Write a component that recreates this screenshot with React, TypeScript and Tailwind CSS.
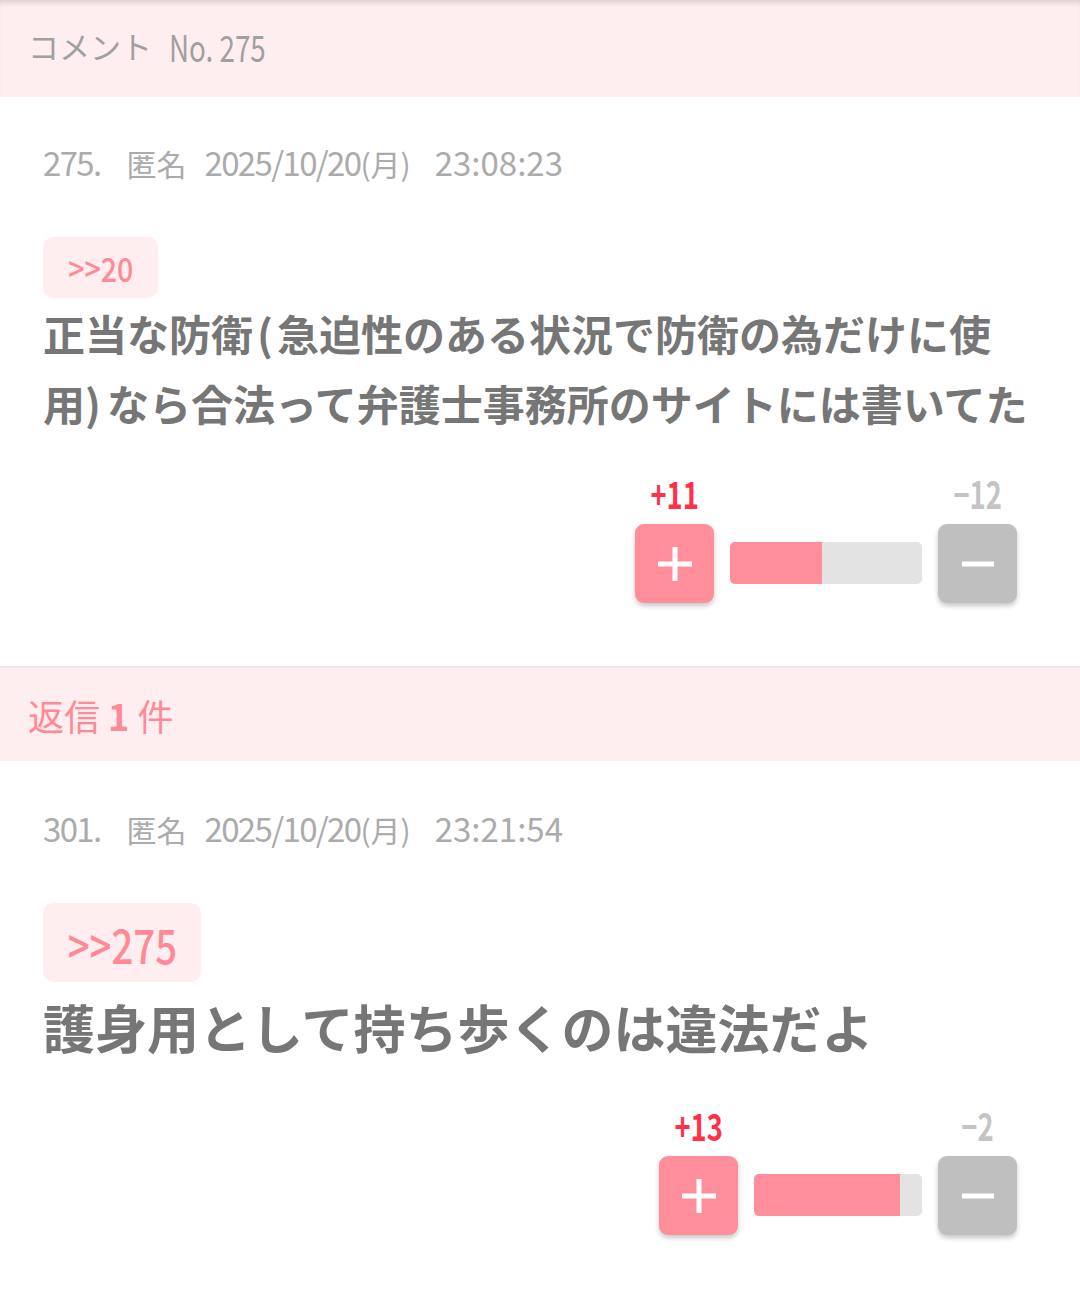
import React from 'react';

const font = { fontFamily: '"Noto Sans CJK JP", "Noto Sans", sans-serif' };

type CommentProps = {
  no: string;
  date: string;
  time: string;
  anchor: string;
  anchorClass: string;
  anchorText: string;
  body: React.ReactNode;
  bodyClass: string;
  plus: number;
  minus: number;
  barWidth: number;
  padClass: string;
  gapClass: string;
};

const PlusIcon = () => (
  <svg width="34" height="34" viewBox="0 0 34 34">
    <rect x="14.5" y="0" width="5" height="34" fill="#fff" />
    <rect x="0" y="14.5" width="34" height="5" fill="#fff" />
  </svg>
);

const MinusIcon = () => (
  <svg width="32" height="6" viewBox="0 0 32 6">
    <rect x="0" y="0.5" width="32" height="5" fill="#fff" />
  </svg>
);

const Votes = ({ plus, minus, barWidth }: { plus: number; minus: number; barWidth: number }) => {
  const ratio = plus / (plus + minus);
  return (
    <div className="flex justify-end items-end pr-[20px]">
      <div className="flex flex-col items-center">
        <span className="inline-block scale-x-[0.72] text-[38px] leading-[40px] font-bold text-[#ff3149]">+{plus}</span>
        <button className="mt-[11px] w-[79px] h-[79px] rounded-[9px] bg-[#ff8e9a] flex items-center justify-center shadow-[0_3px_5px_rgba(0,0,0,0.22)]">
          <PlusIcon />
        </button>
      </div>
      <div
        className="mx-[16px] mb-[19px] h-[42px] rounded-[5px] bg-[#e3e3e3] overflow-hidden"
        style={{ width: barWidth }}
      >
        <div className="h-full bg-[#ff8e9a]" style={{ width: `${ratio * 100}%` }} />
      </div>
      <div className="flex flex-col items-center">
        <span className="inline-block scale-x-[0.72] text-[38px] leading-[40px] font-bold text-[#c4c4c4]">−{minus}</span>
        <button className="mt-[11px] w-[79px] h-[79px] rounded-[9px] bg-[#bfbfbf] flex items-center justify-center shadow-[0_3px_5px_rgba(0,0,0,0.22)]">
          <MinusIcon />
        </button>
      </div>
    </div>
  );
};

const Comment = ({ no, date, time, anchor, anchorClass, anchorText, body, bodyClass, plus, minus, barWidth, padClass, gapClass }: CommentProps) => (
  <div className={`bg-white px-[43px] ${padClass}`}>
    <div className="flex items-baseline text-[30px] leading-[45px] text-[#ababab]">
      <span className="text-[33px] tracking-[-0.05em]">{no}.</span>
      <span className="ml-[26px]">匿名</span>
      <span className="ml-[18px] text-[33px] tracking-[-0.05em]">{date}</span>
      <span>(月)</span>
      <span className="ml-[24px] text-[33px]">{time}</span>
    </div>
    <div className="mt-[51px] flex">
      <span className={`flex items-center justify-center rounded-[10px] bg-[#ffeef0] text-[#ff8a96] font-medium ${anchorClass}`}>
        <span className={`inline-block whitespace-nowrap ${anchorText}`}>{anchor}</span>
      </span>
    </div>
    <p className={`font-bold text-[#767676] ${bodyClass}`}>{body}</p>
    <div className={gapClass}>
      <Votes plus={plus} minus={minus} barWidth={barWidth} />
    </div>
  </div>
);

export default function App() {
  return (
    <div className="w-[1080px] min-h-[1291px] bg-white" style={font}>
      <div className="h-[97px] bg-[#ffeef0] flex items-center pl-[28px] pb-[4px] shadow-[inset_0_6px_6px_-4px_rgba(0,0,0,0.16)]">
        <span className="text-[31px] text-[#a0a0a0]">コメント</span>
        <span className="ml-[17px] inline-block origin-left scale-x-[0.75] text-[37px] text-[#a0a0a0] whitespace-nowrap">No. 275</span>
      </div>

      <Comment
        no="275"
        date="2025/10/20"
        time="23:08:23"
        anchor=">>20"
        anchorClass="w-[115px] h-[61px]"
        anchorText="text-[34px] scale-x-[0.84]"
        body={
          <>
            正当な防衛<span className="mx-[4px]">(</span>急迫性のある状況で防衛の為だけに使
            <br />
            用<span className="mr-[6px]">)</span>なら合法って弁護士事務所のサイトには書いてた
          </>
        }
        bodyClass="text-[42px] leading-[70px]"
        plus={11}
        minus={12}
        barWidth={192}
        padClass="pt-[43px] pb-[63px]"
        gapClass="mt-[35px]"
      />

      <div className="border-t-2 border-[#e8e8e8] h-[95px] bg-[#ffeef0] flex items-center pl-[28px]">
        <span className="text-[36px] text-[#ff8a96]">
          返信 <span className="font-bold">1</span> 件
        </span>
      </div>

      <Comment
        no="301"
        date="2025/10/20"
        time="23:21:54"
        anchor=">>275"
        anchorClass="w-[158px] h-[79px]"
        anchorText="text-[48px] scale-x-[0.8]"
        body="護身用として持ち歩くのは違法だよ"
        bodyClass="text-[52px] leading-[90px]"
        plus={13}
        minus={2}
        barWidth={168}
        padClass="pt-[45px] pb-[58px]"
        gapClass="mt-[33px]"
      />
    </div>
  );
}
